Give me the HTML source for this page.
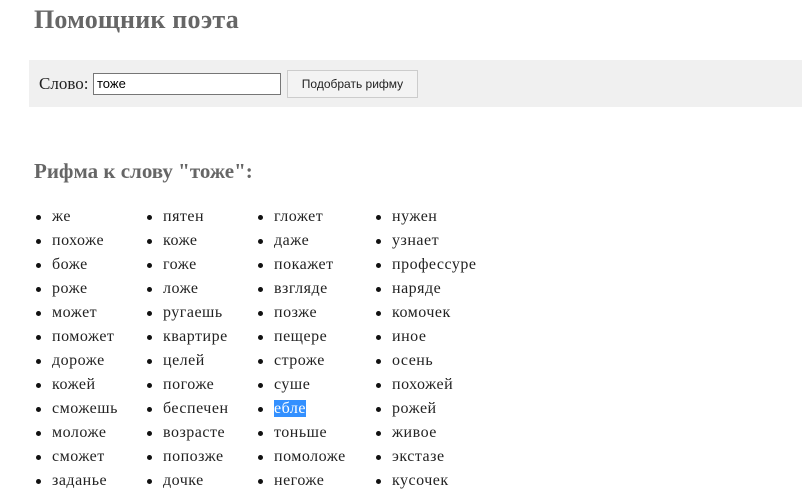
<!DOCTYPE html>
<html><head><meta charset="utf-8"><style>
body{margin:0;width:802px;height:502px;background:#fff;font-family:"Liberation Serif","Noto Serif CJK SC",serif;overflow:hidden;position:relative}
h1{position:absolute;left:34px;top:5px;margin:0;font-size:26px;color:#666;font-weight:bold;letter-spacing:0.2px}
.panel{position:absolute;left:29px;top:60px;width:773px;height:47px;background:#f0f0f0}
.lab{position:absolute;left:10px;top:14px;font-size:17px;color:#222}
.inp{position:absolute;left:64px;top:13px;width:188px;height:22px;border:1px solid #767676;background:#fff;box-sizing:border-box;font:13px "Liberation Sans",sans-serif;padding:1px 3px;line-height:18px}
.btn{position:absolute;left:258px;top:10px;width:131px;height:28px;border:1px solid #ccc;background:#f3f3f3;box-sizing:border-box;font:12px "Liberation Sans",sans-serif;text-align:center;line-height:26px;color:#222}
h2{position:absolute;left:34px;top:159px;margin:0;font-size:21px;color:#666;font-weight:bold}
.col{position:absolute;top:205px;margin:0;padding:0;list-style:none;font-size:16px;letter-spacing:0.5px;color:#222}
.col li{height:24px;line-height:24px;position:relative}
.col li:before{content:"";position:absolute;left:-16px;top:10px;width:5px;height:5px;border-radius:50%;background:#111}
.sel{background:#3390ff;color:#fff}
</style></head><body>
<h1>Помощник поэта</h1>
<div class="panel"><span class="lab">Слово:</span><div class="inp">тоже</div><div class="btn">Подобрать рифму</div></div>
<h2>Рифма к слову "тоже":</h2>
<ul class="col" style="left:52px"><li>же</li><li>похоже</li><li>боже</li><li>роже</li><li>может</li><li>поможет</li><li>дороже</li><li>кожей</li><li>сможешь</li><li>моложе</li><li>сможет</li><li>заданье</li></ul>
<ul class="col" style="left:163px"><li>пятен</li><li>коже</li><li>гоже</li><li>ложе</li><li>ругаешь</li><li>квартире</li><li>целей</li><li>погоже</li><li>беспечен</li><li>возрасте</li><li>попозже</li><li>дочке</li></ul>
<ul class="col" style="left:274px"><li>гложет</li><li>даже</li><li>покажет</li><li>взгляде</li><li>позже</li><li>пещере</li><li>строже</li><li>суше</li><li><span class="sel">ебле</span></li><li>тоньше</li><li>помоложе</li><li>негоже</li></ul>
<ul class="col" style="left:392px"><li>нужен</li><li>узнает</li><li>профессуре</li><li>наряде</li><li>комочек</li><li>иное</li><li>осень</li><li>похожей</li><li>рожей</li><li>живое</li><li>экстазе</li><li>кусочек</li></ul>
</body></html>
